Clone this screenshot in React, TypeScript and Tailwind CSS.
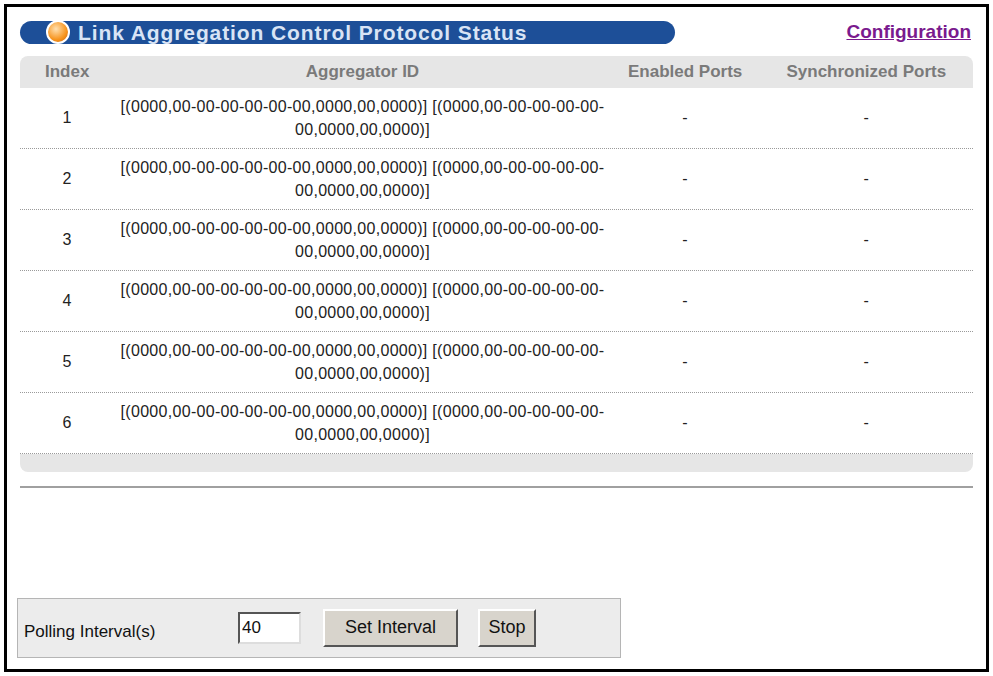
const rows = [1, 2, 3, 4, 5, 6];
const agg = "[(0000,00-00-00-00-00-00,0000,00,0000)] [(0000,00-00-00-00-00-00,0000,00,0000)]";

export default function App() {
  return (
    <div className="w-[993px] h-[676px] bg-white p-[4px]" style={{ fontFamily: '"Liberation Sans", Arial, sans-serif' }}>
      <div className="h-full border-[3px] border-black flex flex-col px-[13px] pt-[11px]">
        {/* title row */}
        <div className="flex items-center justify-between">
          <div className="w-[655px] h-[23px] rounded-full bg-[#1d4f98] flex items-center pl-[26px]">
            <div className="w-[24px] h-[24px] rounded-full bg-[radial-gradient(circle_at_40%_35%,#ffe0b0,#f7941d_60%,#c8620a)] border-2 border-white" />
            <span className="ml-[8px] text-[21px] font-bold text-[#d9e4f5] tracking-[0.9px]">Link Aggregation Control Protocol Status</span>
          </div>
          <a className="mr-[2px] text-[#7a1a8e] underline font-bold text-[19px]">Configuration</a>
        </div>
        {/* table */}
        <div className="mt-[9px] bg-[#e6e6e6] rounded-[8px] pb-[18px]">
          <div className="flex h-[32px] items-center text-[17px] font-bold text-[#7a7a7a]">
            <div className="w-[95px] text-center">Index</div>
            <div className="w-[500px] text-center">Aggregator ID</div>
            <div className="w-[150px] text-center">Enabled Ports</div>
            <div className="w-[215px] text-center">Synchronized Ports</div>
          </div>
          {rows.map((r) => (
            <div key={r} className="flex h-[61px] items-center bg-white border-b border-dotted border-[#9a9a9a] text-[16px] tracking-[0.3px] text-[#222]">
              <div className="w-[95px] text-center">{r}</div>
              <div className="w-[500px] flex justify-center">
                <div className="w-[486px] text-center leading-[23px]">{agg}</div>
              </div>
              <div className="w-[150px] text-center">-</div>
              <div className="w-[215px] text-center">-</div>
            </div>
          ))}
        </div>
        <div className="mt-[14px] h-[2px] bg-[#a0a0a0]" />
        <div className="mt-[110px] ml-[-3px] w-[604px] h-[60px] bg-[#ececec] border border-[#b5b5b5] flex items-center pl-[6px] text-[17px] text-[#111]">
          <span className="w-[214px] mt-[8px]">Polling Interval(s)</span>
          <input defaultValue="40" className="w-[63px] h-[32px] bg-white border-2 border-t-[#555] border-l-[#555] border-b-[#ddd] border-r-[#ddd] px-[2px] text-[17px]" />
          <button className="ml-[22px] w-[135px] h-[38px] bg-[#d8d4cc] text-[18px] border-2 border-t-white border-l-white border-b-[#555] border-r-[#555]">Set Interval</button>
          <button className="ml-[20px] w-[58px] h-[38px] bg-[#d8d4cc] text-[18px] border-2 border-t-white border-l-white border-b-[#555] border-r-[#555]">Stop</button>
        </div>
      </div>
    </div>
  );
}
